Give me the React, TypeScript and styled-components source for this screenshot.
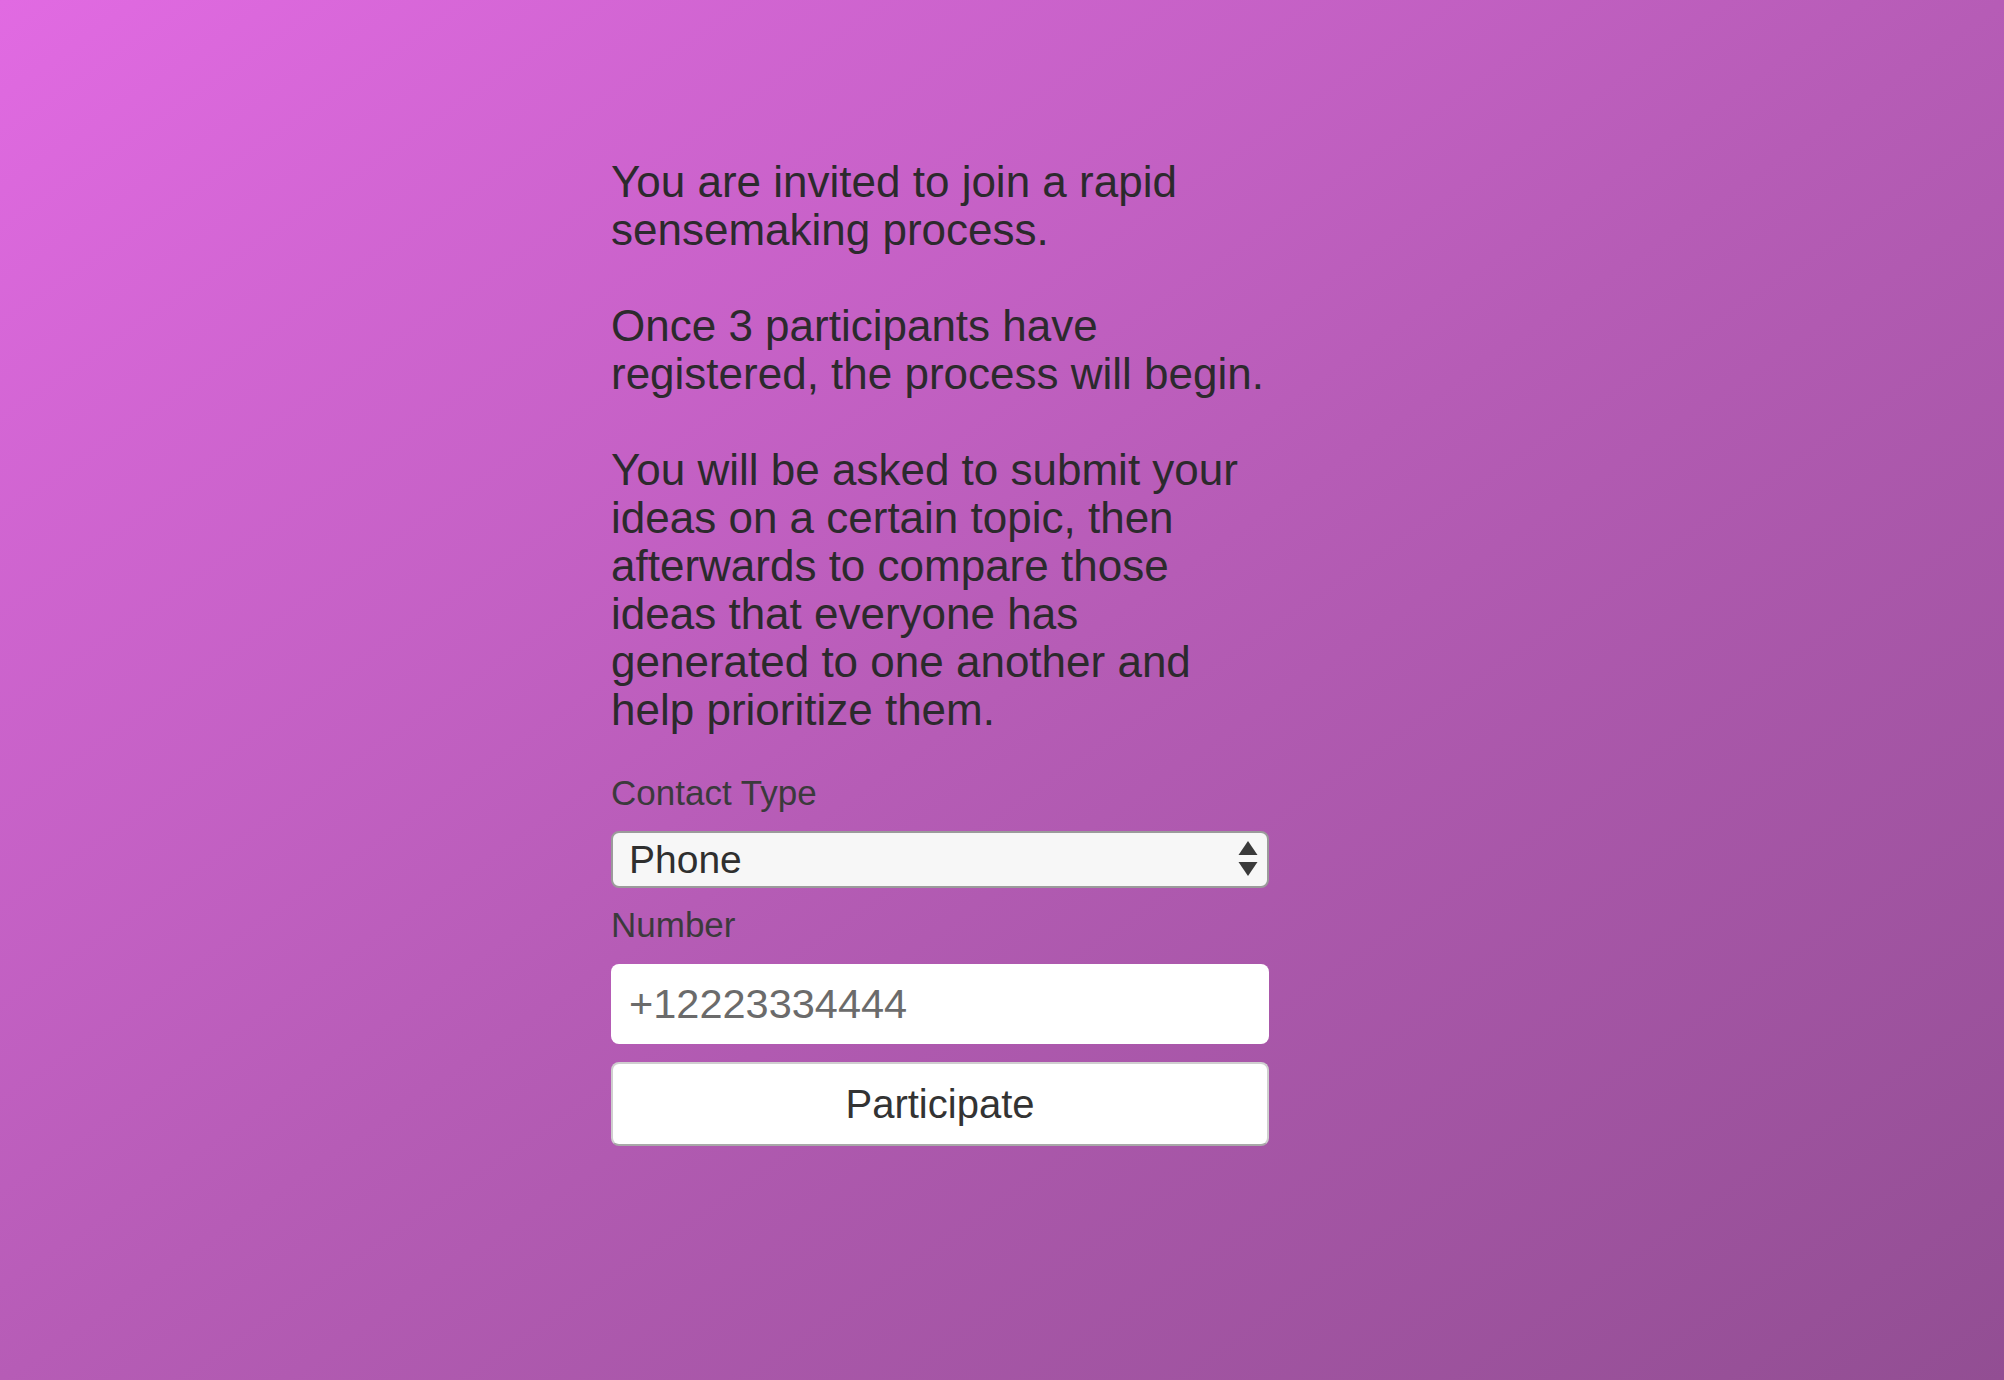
import { useState } from "react";
import { styled, createGlobalStyle } from "styled-components";

const GlobalStyle = createGlobalStyle`
  html, body {
    margin: 0;
    padding: 0;
  }
  body {
    font-family: "Liberation Sans", Arial, sans-serif;
  }
`;

const App = () => {
  const [contactType, setContactType] = useState("phone");
  const [number, setNumber] = useState("");

  return (
    <St.Page>
      <GlobalStyle />
      <St.Column>
        <St.Intro>
          <St.Paragraph>
            You are invited to join a rapid
            <br />
            sensemaking process.
          </St.Paragraph>
          <St.Paragraph>
            Once 3 participants have
            <br />
            registered, the process will begin.
          </St.Paragraph>
          <St.Paragraph>
            You will be asked to submit your
            <br />
            ideas on a certain topic, then
            <br />
            afterwards to compare those
            <br />
            ideas that everyone has
            <br />
            generated to one another and
            <br />
            help prioritize them.
          </St.Paragraph>
        </St.Intro>

        <St.Form onSubmit={(e) => e.preventDefault()}>
          <St.Label htmlFor="contact-type">Contact Type</St.Label>
          <St.SelectWrapper>
            <St.Select
              id="contact-type"
              value={contactType}
              onChange={(e) => setContactType(e.target.value)}
            >
              <option value="phone">Phone</option>
              <option value="email">Email</option>
            </St.Select>
            <St.Arrows width="20" height="36" viewBox="0 0 20 36">
              <path d="M10 0 L19.5 14 L0.5 14 Z" fill="#3a3a3a" />
              <path d="M0.5 21 L19.5 21 L10 35 Z" fill="#3a3a3a" />
            </St.Arrows>
          </St.SelectWrapper>

          <St.Label htmlFor="number" $gap={18}>
            Number
          </St.Label>
          <St.Input
            id="number"
            placeholder="+12223334444"
            value={number}
            onChange={(e) => setNumber(e.target.value)}
          />

          <St.Button type="submit">Participate</St.Button>
        </St.Form>
      </St.Column>
    </St.Page>
  );
};

export default App;

const St = {
  Page: styled.div`
    min-height: 100vh;
    box-sizing: border-box;
    padding: 158px 0 0 611px;
    background: linear-gradient(to bottom right, #e16ae2 0%, #b65cb6 50%, #924e93 100%);
  `,
  Column: styled.div`
    width: 658px;
    display: flex;
    flex-direction: column;
  `,
  Intro: styled.div`
    color: #2c2a2d;
    font-size: 44px;
    line-height: 48px;
    white-space: nowrap;
  `,
  Paragraph: styled.p`
    margin: 0 0 48px;

    &:last-child {
      margin-bottom: 0;
    }
  `,
  Form: styled.form`
    display: flex;
    flex-direction: column;
    margin-top: 40px;
  `,
  Label: styled.label<{ $gap?: number }>`
    margin-top: ${({ $gap }) => $gap ?? 0}px;
    color: #3b3a3c;
    font-size: 35px;
    line-height: 38px;
  `,
  SelectWrapper: styled.div`
    position: relative;
    margin-top: 19px;
  `,
  Select: styled.select`
    appearance: none;
    -webkit-appearance: none;
    width: 100%;
    height: 57px;
    box-sizing: border-box;
    padding: 0 50px 0 16px;

    border: 2px solid #9b9b9b;
    border-radius: 8px;
    background: #f7f7f7;

    color: #2f2f2f;
    font-family: "Liberation Sans", Arial, sans-serif;
    font-size: 39px;

    &:focus {
      outline: none;
    }
  `,
  Arrows: styled.svg`
    position: absolute;
    top: 10px;
    right: 11px;
    pointer-events: none;
  `,
  Input: styled.input`
    margin-top: 20px;
    height: 80px;
    box-sizing: border-box;
    padding: 0 18px;

    border: none;
    border-radius: 8px;
    background: #ffffff;

    color: #2f2f2f;
    font-family: "Liberation Sans", Arial, sans-serif;
    font-size: 41.5px;

    &:focus {
      outline: none;
    }
    &::placeholder {
      color: #6b6b6b;
    }
  `,
  Button: styled.button`
    margin-top: 18px;
    height: 84px;
    box-sizing: border-box;

    border: 2px solid #cfcfcf;
    border-bottom-color: #a9a9a9;
    border-radius: 8px;
    background: #ffffff;

    color: #333333;
    font-family: "Liberation Sans", Arial, sans-serif;
    font-size: 40px;
    cursor: pointer;
  `,
};
